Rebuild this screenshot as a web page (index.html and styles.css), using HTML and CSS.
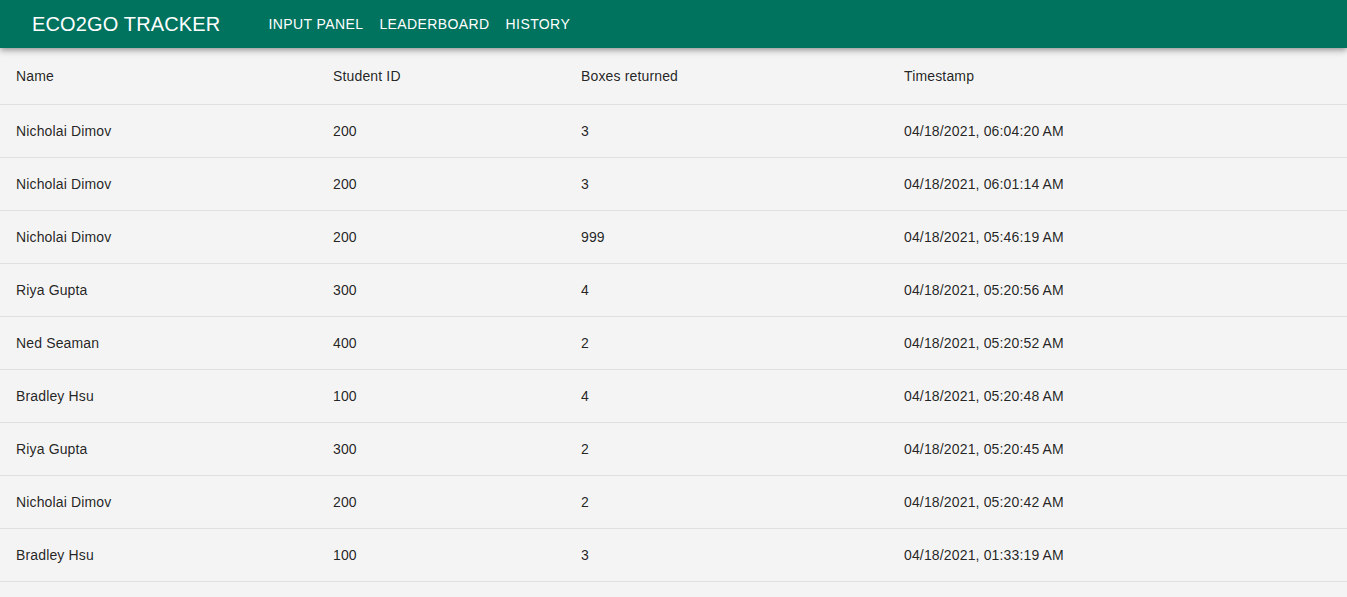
FILE: index.html
```html
<!DOCTYPE html>
<html>
<head>
<meta charset="utf-8">
<link rel="stylesheet" href="styles.css">
</head>
<body>
<header class="appbar">
  <div class="title">ECO2GO TRACKER</div>
  <nav class="nav">
    <a class="navlink">INPUT PANEL</a>
    <a class="navlink">LEADERBOARD</a>
    <a class="navlink">HISTORY</a>
  </nav>
</header>
<main>
<table class="table">
  <colgroup>
    <col class="c1"><col class="c2"><col class="c3"><col class="c4">
  </colgroup>
  <thead>
    <tr><th>Name</th><th>Student ID</th><th>Boxes returned</th><th>Timestamp</th></tr>
  </thead>
  <tbody>
    <tr><td>Nicholai Dimov</td><td>200</td><td>3</td><td>04/18/2021, 06:04:20 AM</td></tr>
    <tr><td>Nicholai Dimov</td><td>200</td><td>3</td><td>04/18/2021, 06:01:14 AM</td></tr>
    <tr><td>Nicholai Dimov</td><td>200</td><td>999</td><td>04/18/2021, 05:46:19 AM</td></tr>
    <tr><td>Riya Gupta</td><td>300</td><td>4</td><td>04/18/2021, 05:20:56 AM</td></tr>
    <tr><td>Ned Seaman</td><td>400</td><td>2</td><td>04/18/2021, 05:20:52 AM</td></tr>
    <tr><td>Bradley Hsu</td><td>100</td><td>4</td><td>04/18/2021, 05:20:48 AM</td></tr>
    <tr><td>Riya Gupta</td><td>300</td><td>2</td><td>04/18/2021, 05:20:45 AM</td></tr>
    <tr><td>Nicholai Dimov</td><td>200</td><td>2</td><td>04/18/2021, 05:20:42 AM</td></tr>
    <tr><td>Bradley Hsu</td><td>100</td><td>3</td><td>04/18/2021, 01:33:19 AM</td></tr>
  </tbody>
</table>
</main>
</body>
</html>
```
FILE: styles.css
```css
html, body {
  margin: 0;
  padding: 0;
  background: #f4f4f4;
  font-family: "Liberation Sans", Arial, sans-serif;
}
.appbar {
  position: relative;
  z-index: 2;
  height: 48px;
  background: #00735f;
  color: #fff;
  display: flex;
  align-items: center;
  padding: 0 24px 0 32px;
  box-shadow: 0 2px 4px -1px rgba(0,0,0,0.2), 0 4px 5px 0 rgba(0,0,0,0.14), 0 1px 10px 0 rgba(0,0,0,0.12);
}
.title {
  font-size: 20px;
  font-weight: 400;
  letter-spacing: 0.0075em;
  margin-right: 40px;
}
.nav {
  display: flex;
}
.navlink {
  font-size: 14px;
  font-weight: 400;
  letter-spacing: 0.02857em;
  padding: 6px 8px;
  line-height: 1.75;
}
.table {
  width: 100%;
  border-collapse: collapse;
  font-size: 14px;
  letter-spacing: 0.01071em;
  color: rgba(0,0,0,0.87);
}
.c1 { width: 317px; }
.c2 { width: 248px; }
.c3 { width: 323px; }
.c4 { width: auto; }
th, td {
  text-align: left;
  padding: 16px;
  border-bottom: 1px solid #e0e0e0;
  font-weight: 400;
}
th {
  line-height: 24px;
}
td {
  line-height: 20px;
}
```
